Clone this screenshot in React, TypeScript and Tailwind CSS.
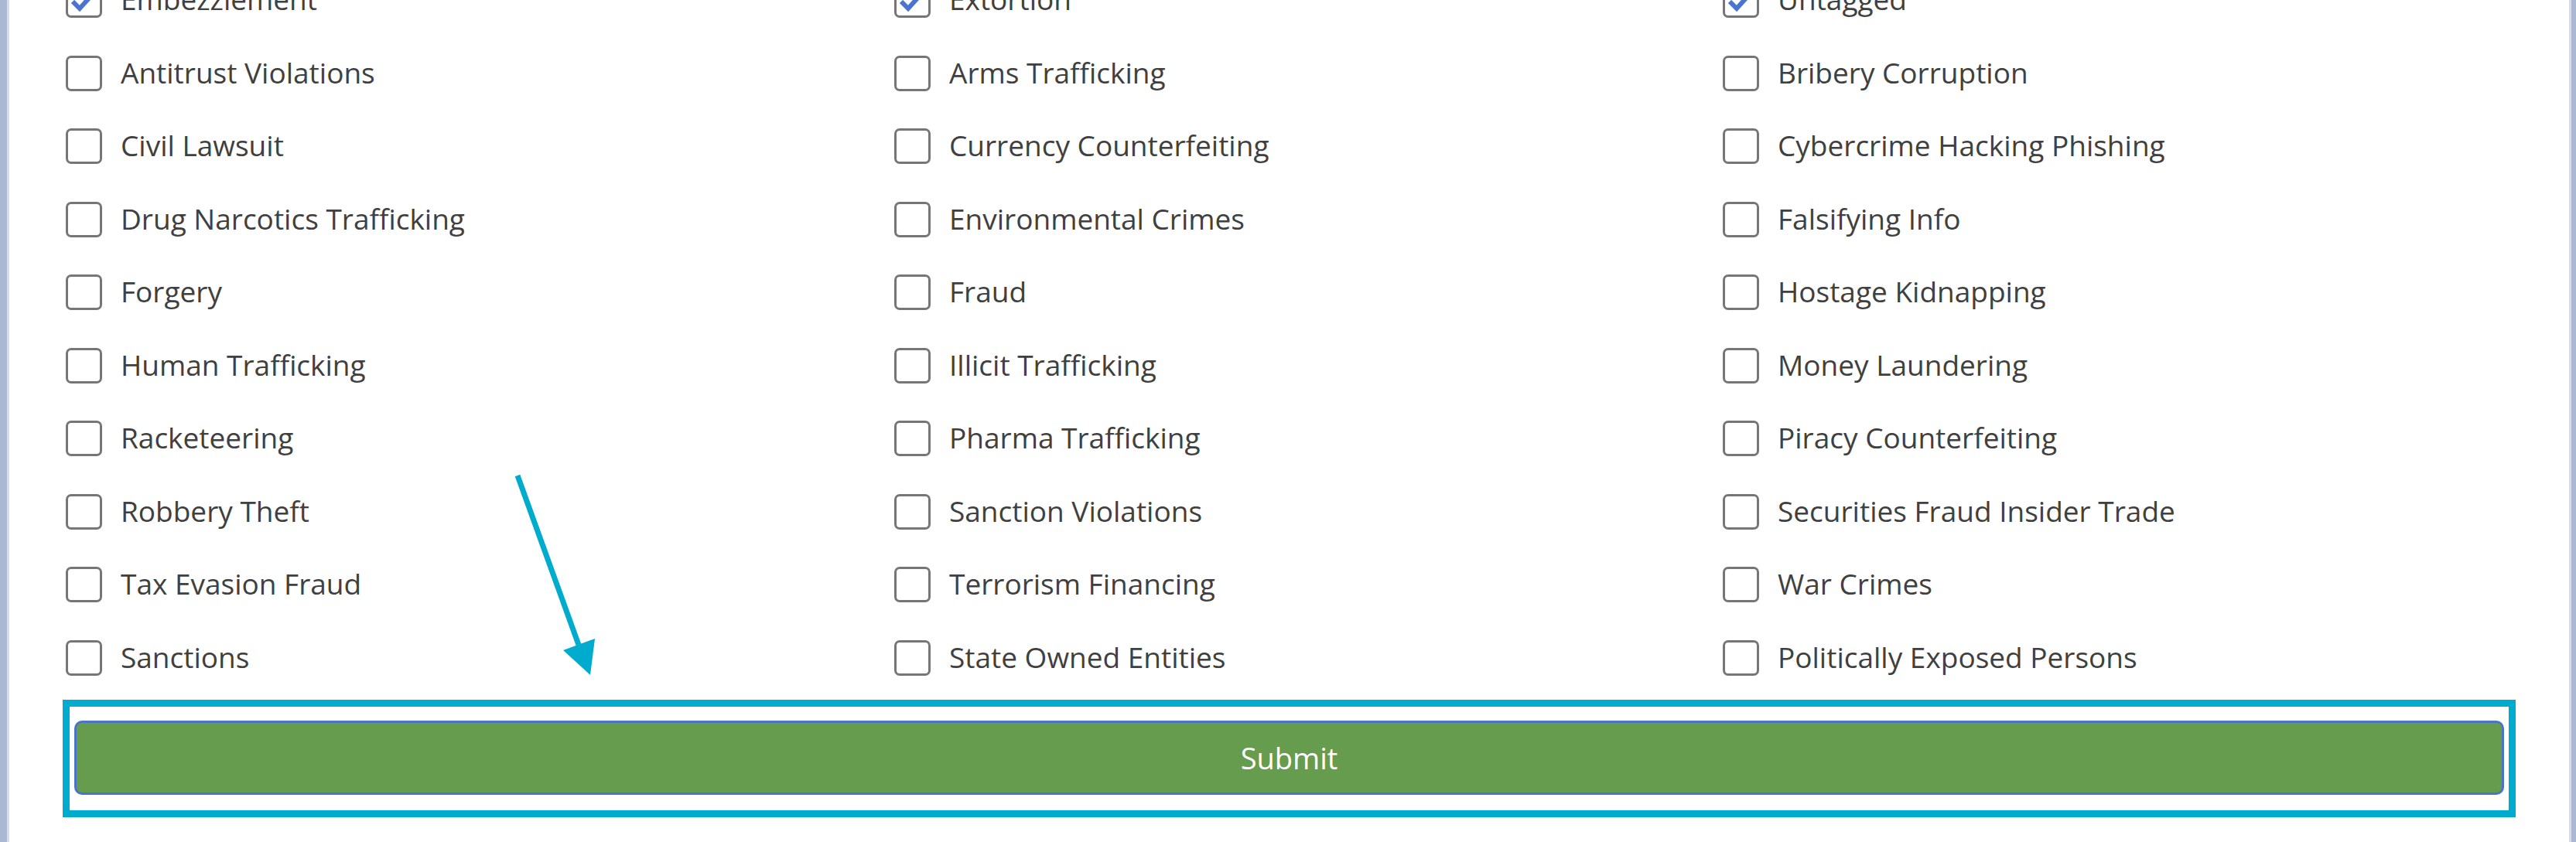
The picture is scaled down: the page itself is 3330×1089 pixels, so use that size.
import React from 'react'

const CATEGORIES: string[] = [
  'Embezzlement',         'Extortion',               'Untagged',
  'Antitrust Violations', 'Arms Trafficking',        'Bribery Corruption',
  'Civil Lawsuit',        'Currency Counterfeiting', 'Cybercrime Hacking Phishing',
  'Drug Narcotics Trafficking', 'Environmental Crimes', 'Falsifying Info',
  'Forgery',              'Fraud',                   'Hostage Kidnapping',
  'Human Trafficking',    'Illicit Trafficking',     'Money Laundering',
  'Racketeering',         'Pharma Trafficking',      'Piracy Counterfeiting',
  'Robbery Theft',        'Sanction Violations',     'Securities Fraud Insider Trade',
  'Tax Evasion Fraud',    'Terrorism Financing',     'War Crimes',
  'Sanctions',            'State Owned Entities',    'Politically Exposed Persons',
]

const CHECKED = new Set(['Embezzlement', 'Extortion', 'Untagged'])

function CheckBox({ checked }: { checked: boolean }) {
  return (
    <span className="relative block h-[46px] w-[47px] shrink-0 rounded-[7px] border-[3px] border-[#767676] bg-white">
      {checked && (
        <svg viewBox="0 0 41 40" className="absolute inset-0 h-full w-full">
          <path d="M6 22 L15 31 L33 11" fill="none" stroke="#4a74cf" strokeWidth="6" strokeLinejoin="miter" />
        </svg>
      )}
    </span>
  )
}

export default function App() {
  return (
    <div className="relative h-[1089px] w-[3330px] overflow-hidden bg-white font-['Open_Sans',sans-serif]">
      <div className="flex h-full">
        <div className="w-[9px] shrink-0 bg-[#aab8d4]" />
        <div className="w-[3px] shrink-0 bg-[#d8dce8]" />

        <main className="min-w-0 flex-1 px-[69px]">
          {/* list is scrolled: the first row sits half above the top edge */}
          <div className="-mt-[47px] grid grid-cols-[1071px_1071px_1fr] pl-[4px]">
            {CATEGORIES.map(name => (
              <label key={name} className="flex h-[94.5px] items-center gap-[24px]">
                <CheckBox checked={CHECKED.has(name)} />
                <span className="mb-[3px] whitespace-nowrap text-[37px] text-[#404040]">{name}</span>
              </label>
            ))}
          </div>

          <div className="mt-[7px] h-[152px] border-[9px] border-[#00acce] px-[6px] pt-[18px]">
            <button className="flex h-[96px] w-full items-center justify-center rounded-[10px] border-[3px] border-[#4a74c8] bg-[#669c4d] text-[38px] text-white">
              Submit
            </button>
          </div>
        </main>

        <div className="w-[3px] shrink-0 bg-[#d8dce8]" />
        <div className="w-[6px] shrink-0 bg-[#aab8d4]" />
      </div>

      {/* annotation arrow pointing at the submit button */}
      <svg className="pointer-events-none absolute left-0 top-0" width="3330" height="1089">
        <line x1="669" y1="615" x2="748" y2="834" stroke="#00acce" strokeWidth="7" />
        <polygon points="728,841 769,826 763,873" fill="#00acce" />
      </svg>
    </div>
  )
}
